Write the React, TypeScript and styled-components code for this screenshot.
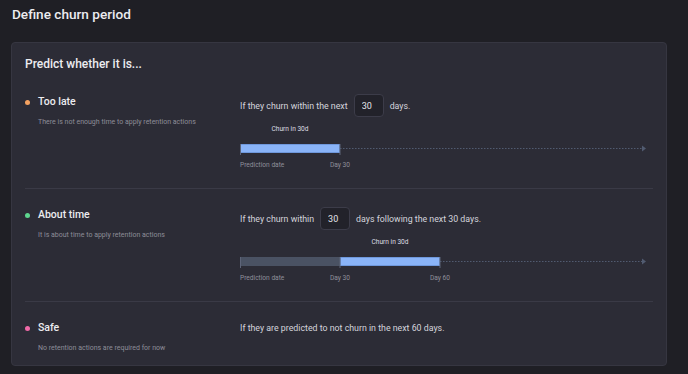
import React from 'react';
import styled, { createGlobalStyle } from 'styled-components';

const GlobalStyle = createGlobalStyle`
  html, body {
    margin: 0;
    padding: 0;
    background: #1f1f25;
  }
  body {
    font-family: Roboto, "Liberation Sans", sans-serif;
    color: #d4d4dc;
  }
`;

const Page = styled.div`
  width: 688px;
  height: 374px;
  box-sizing: border-box;
  padding: 4px 21px 0 11px;
  background: #1f1f25;
  overflow: hidden;
`;

const PageTitle = styled.h1`
  margin: 0 0 18px 1px;
  font-size: 13.6px;
  line-height: 20px;
  font-weight: 500;
  color: #ececf0;
`;

const Card = styled.div`
  background: #2c2c36;
  border: 1px solid #363641;
  border-radius: 4px;
  padding: 11px 13px 11px 13px;
`;

const CardTitle = styled.h2`
  margin: 0 0 2px 0;
  font-size: 12px;
  line-height: 20px;
  font-weight: 500;
  color: #ececf0;
`;

const Row = styled.div<{ last?: boolean }>`
  display: grid;
  grid-template-columns: 215px 1fr;
  padding: 16px 0 ${(p) => (p.last ? '0' : '18px')} 0;
  border-bottom: ${(p) => (p.last ? 'none' : '1px solid #3a3a46')};
`;

const Side = styled.div`
  display: grid;
  grid-template-columns: 13px 1fr;
  align-content: start;
`;

const Bullet = styled.span<{ color: string }>`
  width: 5px;
  height: 5px;
  border-radius: 50%;
  background: ${(p) => p.color};
  margin-top: 8px;
`;

const SideTitle = styled.div`
  font-size: 10.5px;
  line-height: 20px;
  font-weight: 500;
  color: #ececf0;
`;

const SideDesc = styled.div`
  grid-column: 2;
  margin-top: 4px;
  font-size: 7px;
  line-height: 12px;
  color: #8d8d98;
`;

const Main = styled.div`
  display: flex;
  flex-direction: column;
`;

const Sentence = styled.div<{ plain?: boolean }>`
  display: flex;
  align-items: center;
  gap: 6px;
  height: ${(p) => (p.plain ? '20px' : '23px')};
  margin-top: ${(p) => (p.plain ? '0' : '2px')};
  font-size: 8.8px;
  color: #d4d4dc;
`;

const DaysInput = styled.input`
  width: 30px;
  height: 23px;
  box-sizing: border-box;
  padding: 0 0 0 7px;
  border: 1px solid #3c3c49;
  border-radius: 4px;
  background: #22222a;
  color: #e4e4ea;
  font-family: Roboto, "Liberation Sans", sans-serif;
  font-size: 9px;
  outline: none;
`;

const Chart = styled.div`
  position: relative;
  width: 407px;
  margin-top: 7px;
`;

const MarkerRow = styled.div`
  position: relative;
  height: 10px;
  margin-bottom: 10px;
`;

const AxisRow = styled.div`
  position: relative;
  height: 10px;
  margin-top: 4px;
`;

const ChartLabel = styled.span<{ anchor: 'start' | 'middle'; marker?: boolean }>`
  position: absolute;
  top: 0;
  white-space: nowrap;
  font-size: 6.6px;
  line-height: 10px;
  color: ${(p) => (p.marker ? '#dcdce3' : '#8f8f9a')};
  transform: ${(p) => (p.anchor === 'middle' ? 'translateX(-50%)' : 'none')};
`;

const Track = styled.svg`
  display: block;
`;

type Segment = { days: number; kind: 'past' | 'churn' };

const DAY_PX = 100 / 30;
const CHART_W = 407;

const Timeline = ({ segments }: { segments: Segment[] }) => {
  let x = 0;
  const parts = segments.map((s) => {
    const start = x;
    x += s.days * DAY_PX;
    return { ...s, start, end: x };
  });
  const churn = parts.find((p) => p.kind === 'churn')!;
  const lineEnd = CHART_W - 4;
  let day = 0;
  const ticks = parts.map((p) => {
    day += p.days;
    return { x: p.end, label: `Day ${day}` };
  });

  return (
    <Chart>
      <MarkerRow>
        <ChartLabel anchor="middle" marker style={{ left: (churn.start + churn.end) / 2 }}>
          Churn in {churn.days}d
        </ChartLabel>
      </MarkerRow>
      <Track width={CHART_W} height={12}>
        <line x1={x} y1={4.5} x2={lineEnd} y2={4.5} stroke="#515b70" strokeWidth={1} strokeDasharray="1.5 1.5" />
        <path d={`M${lineEnd - 1} 1.5 L${lineEnd + 3} 4.5 L${lineEnd - 1} 7.5 Z`} fill="#515b70" />
        {parts.map((p, i) => (
          <rect
            key={i}
            x={p.start + 0.5}
            y={0.5}
            width={p.end - p.start - 1}
            height={8}
            fill={p.kind === 'churn' ? '#8ab4f8' : '#4a5263'}
            stroke={p.kind === 'churn' ? '#6f98dc' : '#4a5263'}
            strokeWidth={1}
          />
        ))}
        <line x1={0.5} y1={0} x2={0.5} y2={11} stroke="#5d6478" strokeWidth={1} />
        {ticks.map((t, i) => (
          <line key={i} x1={t.x} y1={0} x2={t.x} y2={11} stroke="#5d6478" strokeWidth={1} />
        ))}
      </Track>
      <AxisRow>
        <ChartLabel anchor="start" style={{ left: 0 }}>
          Prediction date
        </ChartLabel>
        {ticks.map((t, i) => (
          <ChartLabel key={i} anchor="middle" style={{ left: t.x }}>
            {t.label}
          </ChartLabel>
        ))}
      </AxisRow>
    </Chart>
  );
};

const App = () => (
  <>
    <GlobalStyle />
    <Page>
      <PageTitle>Define churn period</PageTitle>
      <Card>
        <CardTitle>Predict whether it is...</CardTitle>

        <Row>
          <Side>
            <Bullet color="#f4a261" />
            <SideTitle>Too late</SideTitle>
            <SideDesc>There is not enough time to apply retention actions</SideDesc>
          </Side>
          <Main>
            <Sentence>
              If they churn within the next <DaysInput defaultValue="30" /> days.
            </Sentence>
            <Timeline segments={[{ days: 30, kind: 'churn' }]} />
          </Main>
        </Row>

        <Row>
          <Side>
            <Bullet color="#5ed68f" />
            <SideTitle>About time</SideTitle>
            <SideDesc>It is about time to apply retention actions</SideDesc>
          </Side>
          <Main>
            <Sentence>
              If they churn within <DaysInput defaultValue="30" /> days following the next 30 days.
            </Sentence>
            <Timeline
              segments={[
                { days: 30, kind: 'past' },
                { days: 30, kind: 'churn' },
              ]}
            />
          </Main>
        </Row>

        <Row last>
          <Side>
            <Bullet color="#f06aa8" />
            <SideTitle>Safe</SideTitle>
            <SideDesc>No retention actions are required for now</SideDesc>
          </Side>
          <Main>
            <Sentence plain>If they are predicted to not churn in the next 60 days.</Sentence>
          </Main>
        </Row>
      </Card>
    </Page>
  </>
);

export default App;
